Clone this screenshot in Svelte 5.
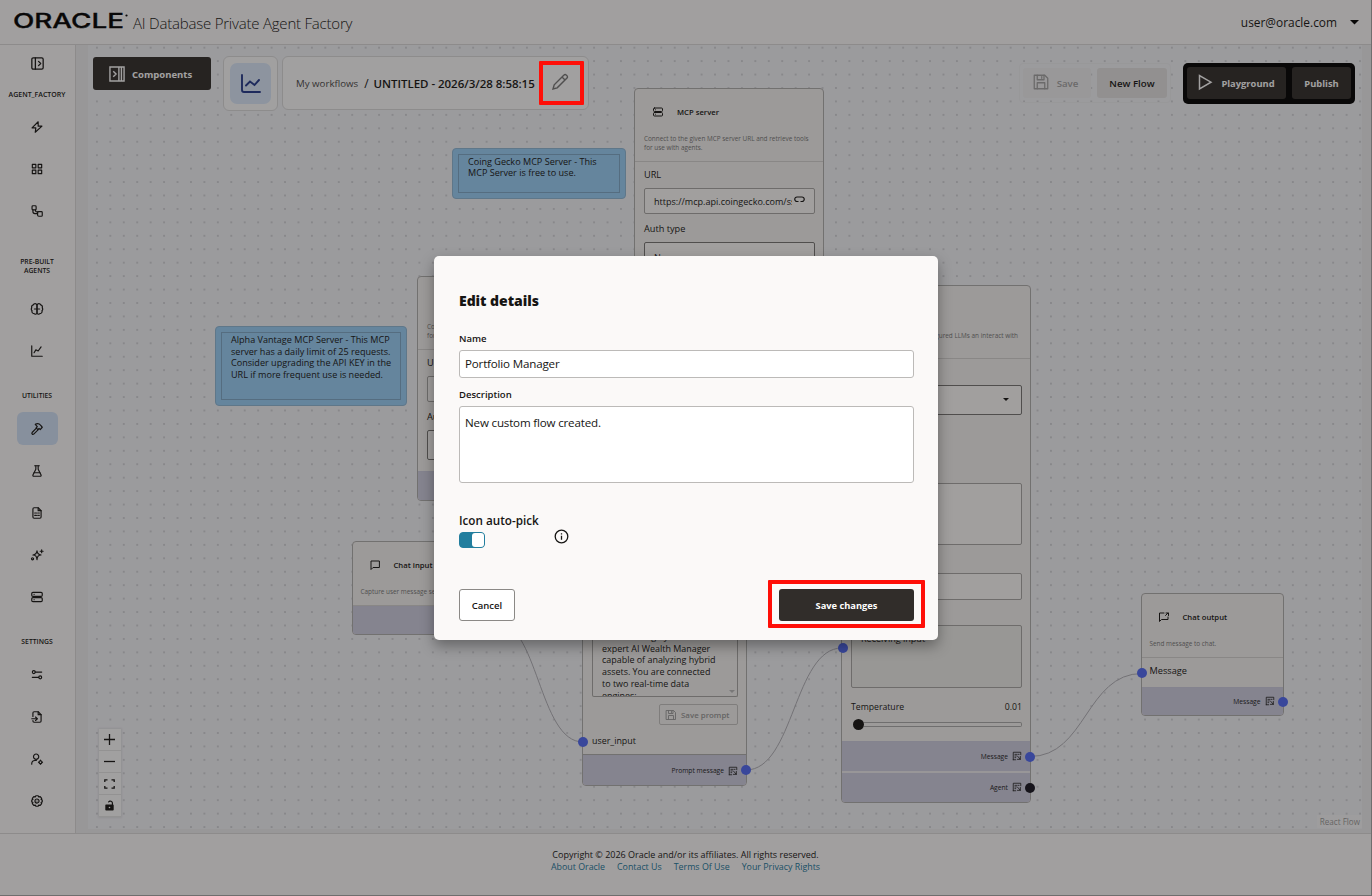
<script>
  const icons = {
    panel: ['M6 4h12a2 2 0 0 1 2 2v12a2 2 0 0 1-2 2H6a2 2 0 0 1-2-2V6a2 2 0 0 1 2-2z', 'M9 4v16', 'M13.500 9l3 3-3 3'],
    bolt: ['M14 3L3.500 13.500H10L9 21l11.500-10.500H14z'],
    grid: ['M4 4h6v6H4z', 'M14 4h6v6h-6z', 'M4 14h6v6H4z', 'M14 14h6v6h-6z'],
    flow: [
      'M5 3h4a1.500 1.500 0 0 1 1.500 1.500v4A1.500 1.500 0 0 1 9 10H5a1.500 1.500 0 0 1-1.500-1.500v-4A1.500 1.500 0 0 1 5 3z',
      'M15.500 13h4a1.500 1.500 0 0 1 1.500 1.500v5a1.500 1.500 0 0 1-1.500 1.500h-4.500a2 2 0 0 1-2-2v-4a2 2 0 0 1 2.500-2z',
      'M5 10v3a3.500 3.500 0 0 0 3.500 3.500H13',
      'M9.500 10v1.500a2 2 0 0 0 2 2h2'
    ],
    brain: [
      'M12 5a3.500 3.500 0 0 0-6.500 0A4 4 0 0 0 3 10a4 4 0 0 0 .5 5A3.800 3.800 0 0 0 7 20a3 3 0 0 0 5-1z',
      'M12 5a3.500 3.500 0 0 1 6.500 0A4 4 0 0 1 21 10a4 4 0 0 1-.5 5A3.800 3.800 0 0 1 17 20a3 3 0 0 1-5-1z',
      'M7.500 12h9'
    ],
    chart: ['M3 3v18h18', 'M7 15l3-5 4 2 5-7'],
    hammer: ['M11.400 10.200l-7.800 7.800a2 2 0 0 0 2.800 2.800l7.800-7.800', 'M9 4c4-2 7-1 9 1.500l3 3.500-3.500 4-2-2-2 2-3-3 2-2z'],
    flask: ['M8 3h8', 'M10 3v6L5 19a1.500 1.500 0 0 0 1.300 2h11.400a1.500 1.500 0 0 0 1.300-2L14 9V3', 'M7 15h10'],
    sheet: ['M14 3v5h5', 'M17 21H7a2 2 0 0 1-2-2V5a2 2 0 0 1 2-2h7l5 5v11a2 2 0 0 1-2 2z', 'M8 12h2M11.500 12h1M14.500 12h1.500', 'M8 16h2M11.500 16h1M14.500 16h1.500'],
    sparkles: ['M12 5c.6 5 2 6.400 7 7-5 .6-6.400 2-7 8-.6-6-2-7.400-7-8 5-.6 6.400-2 7-7z', 'M20 3v5M17.500 5.500h5', 'M2.500 18.500a1.800 1.800 0 1 0 3.600 0 1.800 1.800 0 1 0-3.600 0'],
    server: ['M5 4h14a2 2 0 0 1 2 2v3a2 2 0 0 1-2 2H5a2 2 0 0 1-2-2V6a2 2 0 0 1 2-2z', 'M5 13h14a2 2 0 0 1 2 2v3a2 2 0 0 1-2 2H5a2 2 0 0 1-2-2v-3a2 2 0 0 1 2-2z', 'M7 7.500h.01M7 16.500h.01'],
    sliders: ['M4 7a2.500 2.500 0 1 0 5 0 2.500 2.500 0 1 0-5 0', 'M9 7h11', 'M15 16a2.500 2.500 0 1 0 5 0 2.500 2.500 0 1 0-5 0', 'M4 16h11'],
    fileImport: ['M14 3v5h5', 'M5 11V5a2 2 0 0 1 2-2h7l5 5v11a2 2 0 0 1-2 2H7a2 2 0 0 1-2-2v-1', 'M3 15h9', 'M9.500 12l3 3-3 3'],
    userCog: ['M6 8a4.500 4.500 0 1 0 9 0 4.500 4.500 0 1 0-9 0', 'M3 21v-1a5.500 5.500 0 0 1 5.500-5.500H11', 'M15.500 17.500a2.500 2.500 0 1 0 5 0 2.500 2.500 0 1 0-5 0', 'M18 14v1M18 20v1M14.500 17.500h1M20.500 17.500h1'],
    gear: [
      'M10 3h4l1 2 2.500-.5 2.500 3-1 2 2 1v3l-2 1 1 2-2.500 3-2.500-.5-1 2h-4l-1-2-2.500.5-2.500-3 1-2-2-1v-3l2-1-1-2 2.500-3L9 5z',
      'M8.500 12a3.500 3.500 0 1 0 7 0 3.500 3.500 0 1 0-7 0',
      'M12 12h.01'
    ],
    chat: ['M20 4H4v17l4-4h12z'],
    chatOut: ['M12 4H3v17l4-4h13v-5', 'M15 9l5-5M16 4h5v5'],
    save: ['M3 3h14l4 4v14H3z', 'M7 3v6h9V3', 'M7 21v-8h10v8', 'M13 5v2'],
    inspect: ['M3 21V3h18v6', 'M3 21h6', 'M7 8h4M7 12h3M7 16h2', 'M13 12l7 8M20 13v7h-7M14 8h3']
  };

  const sections = [
    { label: 'AGENT_FACTORY', kind: 'first', items: ['bolt', 'grid', 'flow'] },
    { label: 'PRE-BUILT AGENTS', kind: 'double', items: ['brain', 'chart'] },
    { label: 'UTILITIES', kind: '', items: ['hammer', 'flask', 'sheet', 'sparkles', 'server'] },
    { label: 'SETTINGS', kind: '', items: ['sliders', 'fileImport', 'userCog', 'gear'] }
  ];

  const mcpNodes = [
    { x: 558, y: 43, url: 'https://mcp.api.coingecko.com/sse' },
    { x: 341, y: 231, url: '' }
  ];

  const notes = [
    { x: 376, y: 102.500, w: 173.500, h: 51.500, lines: ['Coing Gecko MCP Server - This', 'MCP Server is free to use.'] },
    {
      x: 139, y: 281, w: 191.500, h: 80,
      lines: ['Alpha Vantage MCP Server - This MCP', 'server has a daily limit of 25 requests.', 'Consider upgrading the API KEY in the', 'URL if more frequent use is needed.']
    }
  ];

  const edges = [
    'M418 575C462.500 575 462.500 697 507 697',
    'M670 725C718 725 718 603 766 603',
    'M954 711.500C1010 711.500 1010 628.500 1066 628.500'
  ];

  const ports = [
    { x: 507, y: 697 },
    { x: 669.500, y: 725 },
    { x: 766.500, y: 602.500 },
    { x: 954, y: 711.500 },
    { x: 954, y: 743, dark: true },
    { x: 1065.500, y: 628 },
    { x: 1207, y: 656.500 }
  ];

  const links = ['About Oracle', 'Contact Us', 'Terms Of Use', 'Your Privacy Rights'];

  let name = $state('Portfolio Manager');
  let description = $state('New custom flow created.');
  let autoPick = $state(true);
</script>

{#snippet icon(id, size = 14, weight = 2)}
  <svg class="icon" width={size} height={size} viewBox="0 0 24 24" stroke-width={weight}>
    {#each icons[id] as d}<path {d} />{/each}
  </svg>
{/snippet}

{#snippet output(label)}
  <div class="output">
    <span>{label}</span>
    {@render icon('inspect', 10, 2)}
  </div>
{/snippet}

<div class="page">
  <header class="topbar">
    <div class="brand">
      <svg class="logo" width="115" height="18" viewBox="0 0 115 18">
        <text x="-1" y="15" textLength="111" lengthAdjust="spacingAndGlyphs">ORACLE</text>
        <circle cx="112.500" cy="2.500" r="1.100" />
      </svg>
      <span class="product">AI Database Private Agent Factory</span>
    </div>
    <div class="account">
      <span>user@oracle.com</span>
      <svg width="9" height="5" viewBox="0 0 9 5"><path d="M0 0h9L4.500 4.500z" /></svg>
    </div>
  </header>

  <div class="body">
    <nav class="sidebar">
      <div class="toggle-nav">{@render icon('panel', 17, 1.8)}</div>
      {#each sections as section}
        <div class="nav-label {section.kind}">{section.label}</div>
        {#each section.items as item}
          <div class="nav-slot">
            <button class="nav-item" class:active={item === 'hammer'} aria-label={item}>
              {@render icon(item, 14, 2)}
            </button>
          </div>
        {/each}
      {/each}
    </nav>

    <main class="canvas">
      <div class="grid"></div>
      <svg class="edges" width="1295" height="788">
        {#each edges as d}<path {d} />{/each}
      </svg>

      {#each notes as note}
        <div class="note" style={`left:${note.x}px;top:${note.y}px;width:${note.w}px;height:${note.h}px`}>
          <div class="note-text">
            {#each note.lines as line}<div>{line}</div>{/each}
          </div>
        </div>
      {/each}

      {#each mcpNodes as node}
        <section class="node mcp" style={`left:${node.x}px;top:${node.y}px`}>
          <div class="node-head">
            <div class="node-title">{@render icon('server', 12, 2)}<b>MCP server</b></div>
            <p>Connect to the given MCP server URL and retrieve tools<br />for use with agents.</p>
          </div>
          <div class="fields">
            <div class="label">URL</div>
            <div class="field url">
              <span>{node.url}</span>
              <svg width="11" height="7" viewBox="0 0 11 7"><path d="M4.500 1H3a2 2 0 0 0 0 4.500h1.500M6.500 1H8a2 2 0 0 1 0 4.500H6.500M3.500 1h4" /></svg>
            </div>
            <div class="label auth">Auth type</div>
            <div class="field select"><span>None</span><i class="caret"></i></div>
          </div>
          {@render output('Tools')}
        </section>
      {/each}

      <section class="node chat-input">
        <div class="node-head">
          <div class="node-title">{@render icon('chat', 12, 2)}<b>Chat input</b></div>
          <p>Capture user message sent in chat</p>
        </div>
        {@render output('Message')}
      </section>

      <section class="node prompt">
        <div class="prompt-body">
          <div class="prompt-text">
            You are a highly<br />expert AI Wealth Manager<br />capable of analyzing hybrid<br />assets. You are connected<br />to two real-time data<br />engines:
            <i class="grip"></i>
          </div>
          <div class="save-prompt">{@render icon('save', 12, 1.8)}<span>Save prompt</span></div>
          <div class="label user">user_input</div>
        </div>
        {@render output('Prompt message')}
      </section>

      <section class="node llm">
        <div class="node-head">
          <p>Connect to configured LLMs an interact with</p>
        </div>
        <div class="llm-body">
          <div class="field model"><i class="caret"></i></div>
          <div class="field instructions"></div>
          <div class="field short"></div>
          <div class="field receiving">Receiving input</div>
          <div class="temperature"><span>Temperature</span><span>0.01</span></div>
          <div class="slider"><span class="track"></span></div>
        </div>
        {@render output('Message')}
        {@render output('Agent')}
      </section>

      <section class="node chat-output">
        <div class="node-head">
          <div class="node-title">{@render icon('chatOut', 12, 2)}<b>Chat output</b></div>
          <p>Send message to chat.</p>
        </div>
        <div class="label message">Message</div>
        {@render output('Message')}
      </section>

      {#each ports as port}
        <span class="port" class:dark={port.dark} style={`left:${port.x}px;top:${port.y}px`}></span>
      {/each}

      <div class="toolbar">
        <button class="components">
          <svg width="16" height="16" viewBox="0 0 17 17"><path d="M1 1h15v15H1zM10.500 1v15M13.200 1v15M4.500 5.500l3 3-3 3" /></svg>
          <span>Components</span>
        </button>
        <div class="chart-card">
          <div class="chart-tile">
            <svg width="22" height="22" viewBox="0 0 22 22"><path d="M2 2v15a2 2 0 0 0 2 2h16M6 12.500l4-4 4.500 3.500 4.500-5" /></svg>
          </div>
        </div>
        <div class="crumbs">
          <span class="crumb">My workflows</span>
          <span class="slash">/</span>
          <span class="current">UNTITLED - 2026/3/28 8:58:15</span>
          <svg class="pencil" width="18" height="18" viewBox="0 0 18 18"><path d="M2 16l1.200-4.200L13 2a1.500 1.500 0 0 1 2.200 0l.8.8A1.500 1.500 0 0 1 16 5L6.200 14.800zM11 4l3 3" /></svg>
        </div>
        <div class="actions">
          <div class="save-group">
            <button class="save" disabled>{@render icon('save', 18, 1.7)}<span>Save</span></button>
            <button class="new-flow">New Flow</button>
          </div>
          <div class="run-group">
            <button class="play">
              <svg width="15" height="17" viewBox="0 0 15 17"><path d="M1.500 1.500v13.500L13 8.200z" /></svg>
              <span>Playground</span>
            </button>
            <button class="publish">Publish</button>
          </div>
        </div>
      </div>

      <div class="controls">
        <div><svg width="11" height="11" viewBox="0 0 11 11"><path d="M5.500 0v11M0 5.500h11" /></svg></div>
        <div><svg width="11" height="11" viewBox="0 0 11 11"><path d="M0 5.500h11" /></svg></div>
        <div><svg width="11" height="10" viewBox="0 0 11 10"><path d="M.8 3V.8h2.700M7.500.8h2.700V3M10.200 7v2.200H7.500M3.500 9.200H.8V7" /></svg></div>
        <div><svg class="lock" width="9" height="11" viewBox="0 0 9 11"><path fill-rule="evenodd" d="M1 4.500h5.800V3c0-1.600-2.600-1.800-2.900-.5L2.900 2.200C3.600-.4 8 .2 8 3v1.500c.5 0 .7.300.7.800v4.400c0 .5-.3.800-.8.800H1.100c-.5 0-.8-.3-.8-.8V5.300c0-.5.3-.8.7-.8zM4.500 6.700a.8.8 0 1 0 0 1.600.8.8 0 0 0 0-1.600z" /></svg></div>
      </div>
      <div class="attribution">React Flow</div>
    </main>
  </div>

  <footer class="footer">
    <div class="copyright">Copyright © 2026 Oracle and/or its affiliates. All rights reserved.</div>
    <div class="links">
      {#each links as link}<span>{link}</span>{/each}
    </div>
  </footer>
</div>

<div class="scrim">
  <form class="dialog" onsubmit={(e) => e.preventDefault()}>
    <h2>Edit details</h2>
    <label for="name">Name</label>
    <input id="name" type="text" bind:value={name} />
    <label for="description">Description</label>
    <textarea id="description" bind:value={description}></textarea>
    <div class="auto">
      <div>
        <div class="auto-label">Icon auto-pick</div>
        <button
          type="button"
          class="switch"
          class:on={autoPick}
          aria-label="Icon auto-pick"
          onclick={() => (autoPick = !autoPick)}
        ></button>
      </div>
      <svg width="15" height="15" viewBox="0 0 15 15"><circle cx="7.500" cy="7.500" r="6.300" /><path d="M7.500 6.700v4M7.500 4.200v1.300" /></svg>
    </div>
    <div class="dialog-actions">
      <button type="button" class="cancel">Cancel</button>
      <button type="submit" class="submit">Save changes</button>
    </div>
  </form>
</div>
<div class="highlight edit"></div>
<div class="highlight confirm"></div>

<style>
  :global(body) {
    background: #fff;
    font-family: 'Open Sans', 'Noto Sans', sans-serif;
    color: #161513;
    overflow: hidden;
  }

  * {
    box-sizing: border-box;
  }

  button {
    font-family: inherit;
    border: 0;
    padding: 0;
    cursor: pointer;
  }

  .icon {
    display: block;
    flex: none;
    fill: none;
    stroke: currentColor;
    stroke-linecap: round;
    stroke-linejoin: round;
  }

  .page {
    display: flex;
    flex-direction: column;
    width: 1372px;
    height: 896px;
    border-right: 1px solid #aaa;
    border-bottom: 1px solid #aaa;
    background: #fefcfc;
  }

  .topbar {
    display: flex;
    align-items: center;
    justify-content: space-between;
    height: 45px;
    padding: 0 12px 0 14px;
    border-bottom: 1px solid #dcdada;
  }

  .brand {
    display: flex;
    align-items: center;
    gap: 4px;
  }

  .logo {
    overflow: visible;
  }

  .logo text {
    font-family: Inter, sans-serif;
    font-size: 19.500px;
    font-weight: 500;
    fill: #000;
    stroke: #000;
    stroke-width: 0.3;
  }

  .product {
    padding-top: 2px;
    font-size: 15px;
    font-weight: 300;
    letter-spacing: -0.21px;
    white-space: nowrap;
  }

  .account {
    display: flex;
    align-items: center;
    gap: 13px;
    font-size: 11.900px;
    font-weight: 500;
  }

  .body {
    display: flex;
    height: 789px;
    border-bottom: 1px solid #dcdada;
  }

  .sidebar {
    width: 76px;
    flex: none;
    padding-right: 1px;
    border-right: 1px solid #dcdada;
  }

  .toggle-nav {
    display: grid;
    place-items: center;
    height: 37.500px;
  }

  .nav-label {
    display: flex;
    align-items: center;
    justify-content: center;
    height: 36px;
    padding: 12px 14px 0;
    font-size: 6.800px;
    font-weight: 600;
    line-height: 9px;
    text-align: center;
  }

  .nav-label.first {
    height: 23px;
    padding: 0;
    font-size: 7px;
  }

  .nav-label.double {
    height: 56px;
  }

  .nav-slot {
    display: grid;
    place-items: center;
    height: 42px;
  }

  .nav-item {
    display: grid;
    place-items: center;
    width: 41px;
    height: 33px;
    border-radius: 6px;
    background: transparent;
    color: #161513;
  }

  .nav-item.active {
    background: #d3e3f8;
  }

  .canvas {
    position: relative;
    flex: 1;
    overflow: hidden;
    background: #eeeff0;
  }

  .grid {
    position: absolute;
    inset: 0 9px 4px 12px;
    background-color: #f4f5f9;
    background-image: radial-gradient(circle, #a4a5ab 0.5px, transparent 0.8px);
    background-size: 13.440px 13.440px;
    background-position: 2.200px 9.400px;
  }

  .edges {
    position: absolute;
    inset: 0;
    fill: none;
    stroke: #b1b1b7;
  }

  .note {
    position: absolute;
    padding: 5px;
    border: 1px solid #8fb9d8;
    border-radius: 4px;
    background: #99d0f9;
  }

  .note-text {
    height: 100%;
    padding: 1px 9px;
    border: 1px solid #7fa9c9;
    font-size: 9.080px;
    line-height: 11.700px;
    white-space: nowrap;
  }

  .node {
    position: absolute;
    display: flex;
    flex-direction: column;
    border: 1px solid #b0afae;
    border-radius: 4px;
    background: #f5f4f2;
    overflow: hidden;
  }

  .node-head {
    height: 73px;
    padding: 13px 9px 0;
    border-bottom: 1px solid #d5d4d2;
    white-space: nowrap;
  }

  .node-title {
    display: flex;
    align-items: center;
    gap: 13px;
    height: 20px;
    padding-left: 8px;
    font-size: 7.700px;
  }

  .node-title b {
    font-weight: 600;
  }

  .node-head p {
    margin: 12px 0 0;
    font-size: 6.400px;
    line-height: 9px;
    color: #777;
  }

  .mcp {
    width: 190px;
    height: 225px;
  }

  .fields {
    height: 121px;
    padding: 0 8px 0 9px;
  }

  .label {
    font-size: 9.200px;
    line-height: 12px;
  }

  .fields .label {
    padding: 7px 0;
    height: 26px;
  }

  .fields .label.auth {
    margin-top: 2px;
  }

  .field {
    border: 1px solid #a8a7a5;
    border-radius: 2px;
    background: #fdfcfb;
    font-size: 9.050px;
  }

  .url {
    display: flex;
    align-items: center;
    gap: 2px;
    height: 26px;
    padding: 0 9px;
  }

  .url span {
    width: 138px;
    overflow: hidden;
    white-space: nowrap;
  }

  .url svg {
    margin-bottom: 3px;
    fill: none;
    stroke: #161513;
    stroke-width: 1.200;
  }

  .select,
  .model {
    display: flex;
    align-items: center;
    justify-content: space-between;
    height: 30px;
    padding: 0 12px 0 9px;
    border-color: #777674;
  }

  .caret {
    border: 3.500px solid transparent;
    border-top-color: #161513;
    border-bottom: 0;
  }

  .output {
    display: flex;
    flex: 1;
    align-items: center;
    justify-content: flex-end;
    gap: 4px;
    padding-right: 8px;
    border-top: 1px solid #cdcde0;
    background: #cfcfe2;
    font-size: 6.700px;
    color: #222;
  }

  .chat-input,
  .chat-output {
    width: 143px;
  }

  .chat-input {
    left: 275.500px;
    top: 496px;
    height: 94px;
  }

  .chat-input .node-head,
  .chat-output .node-head {
    height: 64px;
    padding-left: 8px;
  }

  .chat-output {
    left: 1064.500px;
    top: 547.500px;
    height: 123px;
  }

  .message {
    height: 29px;
    padding: 7px 8px;
  }

  .prompt {
    left: 506px;
    top: 495px;
    width: 165px;
    height: 246px;
  }

  .prompt-body {
    display: flex;
    flex-direction: column;
    height: 214px;
    padding: 88px 8px 0 9px;
    border-bottom: 1px solid #b0afae;
  }

  .prompt-text {
    position: relative;
    height: 68px;
    padding: 2px 9px;
    border: 1px solid #a8a7a5;
    border-top: 0;
    border-radius: 2px;
    overflow: hidden;
    font-size: 8.950px;
    line-height: 11.700px;
    white-space: nowrap;
  }

  .grip {
    position: absolute;
    right: 2px;
    bottom: 3px;
    border: 3px solid transparent;
    border-top-color: #bbb;
    border-bottom: 0;
  }

  .save-prompt {
    display: flex;
    align-items: center;
    align-self: flex-end;
    gap: 4px;
    width: 79px;
    height: 21px;
    margin-top: 7px;
    padding-left: 5px;
    border: 1px solid #c5c4c2;
    border-radius: 2px;
    font-size: 7.900px;
    font-weight: 600;
    color: #999;
  }

  .user {
    margin-top: 10px;
    font-size: 8.900px;
  }

  .llm {
    left: 765px;
    top: 239.500px;
    width: 190px;
    height: 518px;
  }

  .llm .node-head {
    padding-top: 33px;
  }

  .llm .node-head p {
    text-align: right;
    padding-right: 3px;
  }

  .llm-body {
    height: 382.500px;
    padding: 26px 8px 0 9px;
  }

  .model {
    justify-content: flex-end;
  }

  .instructions {
    height: 62px;
    margin-top: 68px;
  }

  .short {
    height: 27px;
    margin-top: 28px;
  }

  .receiving {
    height: 63px;
    margin-top: 25px;
    padding: 6px 9px;
    background: #efeeec;
  }

  .temperature {
    display: flex;
    justify-content: space-between;
    margin-top: 13px;
    font-size: 8.700px;
    line-height: 13px;
  }

  .slider {
    display: flex;
    align-items: center;
    height: 11px;
    margin: 5px 0 0 2px;
  }

  .slider::before {
    content: '';
    width: 11px;
    height: 11px;
    border-radius: 50%;
    background: #161513;
  }

  .track {
    flex: 1;
    height: 5px;
    border: 1px solid #aaa;
    border-left: 0;
    border-radius: 0 2px 2px 0;
  }

  .llm .output + .output {
    border-top: 2px solid #eeedf0;
  }

  .port {
    position: absolute;
    width: 10px;
    height: 10px;
    margin: -5px 0 0 -5px;
    border-radius: 50%;
    background: #5069f5;
  }

  .port.dark {
    background: #161520;
  }

  .toolbar {
    position: absolute;
    inset: 11px 16px auto 17px;
    display: flex;
    align-items: flex-start;
  }

  .components {
    display: flex;
    align-items: center;
    gap: 7px;
    width: 118px;
    height: 33px;
    margin: 1px 12px 0 0;
    padding-left: 16px;
    border-radius: 3px;
    background: #312d2a;
    color: #fff;
    font-size: 9.500px;
    font-weight: 700;
  }

  .components span {
    padding-top: 1px;
  }

  .components svg {
    fill: none;
    stroke: #fff;
    stroke-width: 1.500;
  }

  .chart-card {
    width: 55px;
    height: 55px;
    padding: 6px;
    border: 1px solid #dcdcdc;
    border-radius: 6px;
    background: #fefefe;
  }

  .chart-tile {
    display: grid;
    place-items: center;
    height: 100%;
    border-radius: 7px;
    background: #dceafc;
  }

  .chart-tile svg {
    fill: none;
    stroke: #243a8c;
    stroke-width: 1.900;
    stroke-linecap: round;
  }

  .crumbs {
    display: flex;
    align-items: center;
    width: 307px;
    height: 54px;
    margin-left: 4px;
    padding-left: 13px;
    border: 1px solid #dcdcdc;
    border-radius: 6px;
    background: #fdfdfd;
    white-space: nowrap;
  }

  .crumb {
    font-size: 9.700px;
    color: #4b4a48;
  }

  .slash {
    margin: 0 5px 0 6px;
    font-size: 12px;
  }

  .current {
    font-size: 11.500px;
    font-weight: 600;
    letter-spacing: -0.03px;
  }

  .pencil {
    margin: 0 0 2px 16px;
    fill: none;
    stroke: #777;
    stroke-width: 1.400;
  }

  .actions {
    display: flex;
    gap: 12px;
    margin: 7px 0 0 auto;
  }

  .save-group {
    display: flex;
    gap: 6px;
    width: 152px;
    height: 40px;
    padding: 4px 3px;
    border: 1px solid #eff0f2;
    border-radius: 4px;
  }

  .save-group button {
    display: flex;
    align-items: center;
    justify-content: center;
    gap: 7px;
    height: 30px;
    border-radius: 3px;
    font-size: 9.700px;
    font-weight: 600;
  }

  .save-group .save {
    width: 68px;
    padding-right: 4px;
    background: #f0f0f2;
    color: #a3a3a3;
  }

  .save-group .save .icon {
    margin-bottom: 2px;
  }

  .save-group .new-flow {
    width: 70px;
    background: #e4e3e3;
    color: #161513;
  }

  .run-group {
    display: flex;
    gap: 6px;
    width: 172px;
    height: 41px;
    padding: 4px;
    border-radius: 5px;
    background: #000;
  }

  .run-group button {
    display: flex;
    align-items: center;
    justify-content: center;
    gap: 8px;
    width: 59px;
    height: 32px;
    border-radius: 3px;
    background: #312d2a;
    color: #fff;
    font-size: 9.350px;
    font-weight: 700;
  }

  .run-group .play {
    width: 99px;
  }

  .play svg {
    margin-bottom: 2px;
    fill: none;
    stroke: #fff;
    stroke-width: 1.500;
  }

  .controls {
    position: absolute;
    left: 22.500px;
    bottom: 16px;
    box-shadow: 0 0 2px 1px rgba(0, 0, 0, 0.08);
  }

  .controls div {
    display: grid;
    place-items: center;
    width: 22px;
    height: 22px;
    border-bottom: 1px solid #e6e6e6;
    background: #fefefe;
  }

  .controls svg {
    fill: none;
    stroke: #161513;
    stroke-width: 1.300;
  }

  .controls .lock {
    fill: #161513;
    stroke: none;
  }

  .attribution {
    position: absolute;
    right: 9px;
    bottom: 5px;
    padding: 1px 2px 1px 3px;
    background: #f9f9fb;
    font-size: 8.100px;
    line-height: 11px;
    color: #999;
  }

  .footer {
    flex: 1;
    padding-top: 15px;
    text-align: center;
    font-size: 9px;
    line-height: 12px;
  }

  .links {
    display: flex;
    justify-content: center;
    gap: 12px;
    font-size: 8.850px;
    color: #21789c;
  }

  .scrim {
    position: absolute;
    inset: 0;
    display: grid;
    place-items: center;
    background: rgba(22, 21, 19, 0.4);
  }

  .dialog {
    display: flex;
    flex-direction: column;
    width: 504px;
    height: 384px;
    padding: 33px 24px 19px 25px;
    border-radius: 5px;
    background: #fbf9f8;
    box-shadow: 0 6px 14px rgba(0, 0, 0, 0.35);
  }

  .dialog h2 {
    margin: 0 0 18px;
    font-size: 14px;
    font-weight: 800;
    line-height: 24px;
    letter-spacing: -0.04px;
  }

  .dialog label {
    font-size: 9.500px;
    font-weight: 600;
    line-height: 16px;
    margin-bottom: 3px;
  }

  .dialog input,
  .dialog textarea {
    width: 100%;
    padding: 0 5px;
    border: 1px solid #bcbab8;
    border-radius: 3px;
    outline: none;
    background: #fff;
    color: #161513;
    font-family: inherit;
    font-size: 11.600px;
    letter-spacing: -0.18px;
    resize: none;
  }

  .dialog input {
    height: 28px;
    flex: none;
    margin-bottom: 9px;
    padding-bottom: 2px;
  }

  .dialog textarea {
    height: 77px;
    flex: none;
    padding-top: 8px;
  }

  .auto {
    display: flex;
    align-items: flex-start;
    gap: 15px;
    margin-top: 28px;
  }

  .auto svg {
    margin-top: 18px;
    fill: none;
    stroke: #161513;
    stroke-width: 1.300;
  }

  .auto-label {
    font-size: 11.700px;
    font-weight: 600;
    line-height: 18px;
    white-space: nowrap;
  }

  .switch {
    display: flex;
    width: 26px;
    height: 16px;
    margin-top: 3px;
    border: 1px solid #227e9e;
    border-radius: 4px;
    background: #fff;
  }

  .switch::after {
    content: '';
    width: 12px;
    height: 14px;
    border-radius: 3px;
    background: #227e9e;
  }

  .switch.on {
    justify-content: flex-end;
    background: #227e9e;
  }

  .switch.on::after {
    background: #fff;
  }

  .dialog-actions {
    display: flex;
    justify-content: space-between;
    margin-top: auto;
  }

  .dialog-actions button {
    height: 32px;
    border-radius: 3px;
    font-size: 9.500px;
    font-weight: 600;
  }

  .dialog-actions .cancel {
    width: 56px;
    border: 1px solid #8b8986;
    background: #fff;
    color: #161513;
  }

  .dialog-actions .submit {
    width: 135px;
    background: #312d2a;
    color: #fff;
    font-size: 9.300px;
    font-weight: 700;
  }

  .highlight {
    position: absolute;
    border: 4px solid #ff0f08;
    border-radius: 1px;
    pointer-events: none;
  }

  .highlight.edit {
    left: 539px;
    top: 61px;
    width: 45px;
    height: 44px;
  }

  .highlight.confirm {
    left: 768px;
    top: 580px;
    width: 157px;
    height: 48px;
  }
</style>
